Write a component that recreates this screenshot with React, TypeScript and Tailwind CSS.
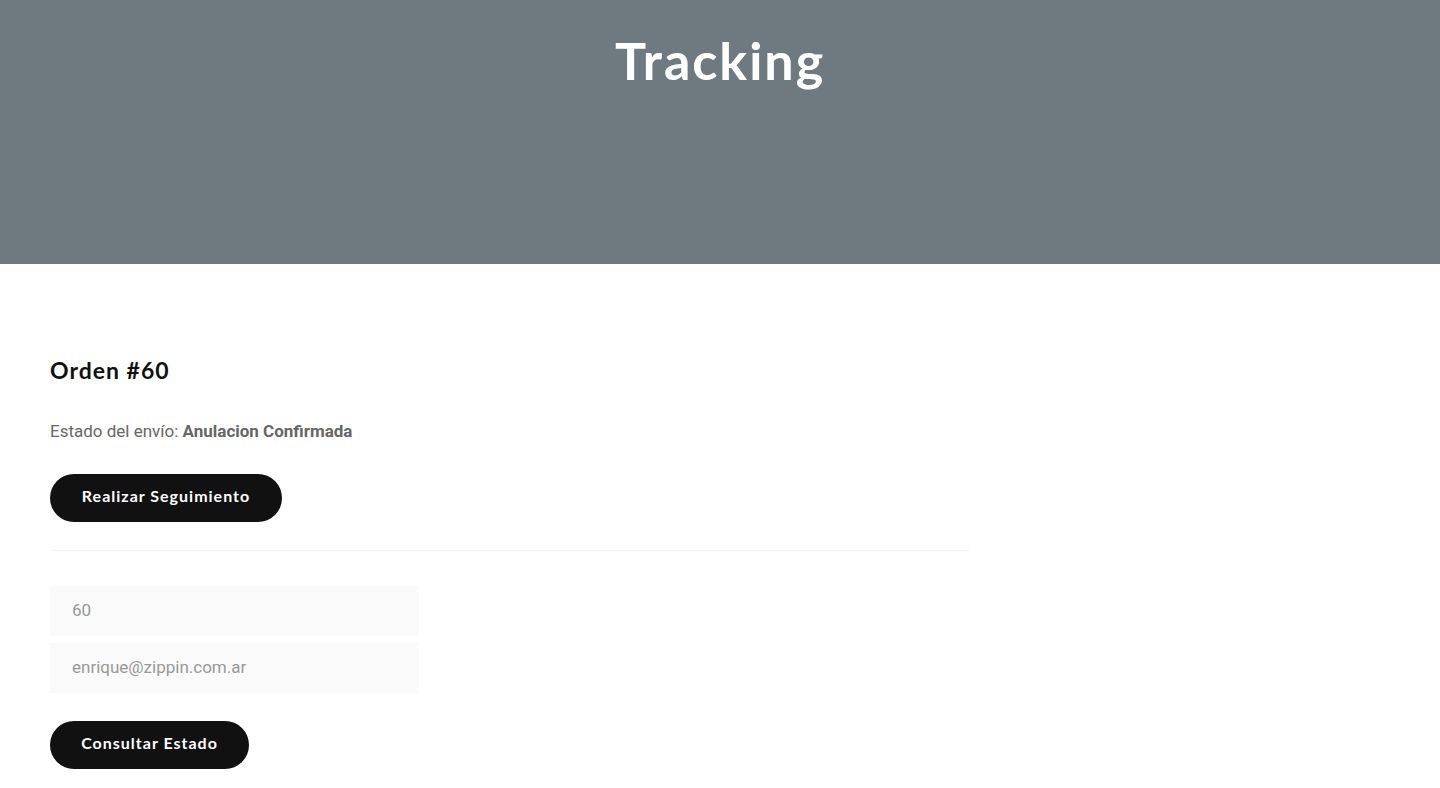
import React from "react";

export default function App() {
  const heading = { fontFamily: '"Lato", "DejaVu Sans", sans-serif' };
  const body = { fontFamily: '"Roboto", "Liberation Sans", sans-serif' };
  return (
    <div className="min-h-[788px] bg-white">
      <header className="h-[264px] bg-[#6f7a80] flex justify-center">
        <h1 style={heading} className="mt-[25px] text-[52px] leading-[70px] font-bold text-white tracking-[2px]">
          Tracking
        </h1>
      </header>
      <main className="px-[50px] pt-[91px]">
        <div className="w-[920px]">
          <h2 style={heading} className="text-[23px] leading-[30px] font-bold text-[#111] tracking-[1px]">
            Orden #60
          </h2>
          <p style={body} className="mt-[34px] text-[17px] leading-[24px] text-[#666]">
            Estado del envío: <span className="font-bold">Anulacion Confirmada</span>
          </p>
          <button style={heading} className="mt-[31px] h-[48px] w-[232px] pb-[4px] rounded-full bg-[#111] text-white text-[16px] font-bold tracking-[1px]">
            Realizar Seguimiento
          </button>
          <div className="mt-[28px] ml-[2px] h-px bg-[#f3f3f3]" />
          <div className="mt-[35px] flex flex-col gap-[7px] w-[369px]">
            <input
              style={body}
              readOnly
              value="60"
              className="h-[50px] bg-[#fafafa] px-[22px] pb-[2px] text-[17px] text-[#999] outline-none"
            />
            <input
              style={body}
              readOnly
              value="enrique@zippin.com.ar"
              className="h-[50px] bg-[#fafafa] px-[22px] pb-[2px] text-[17px] text-[#999] outline-none"
            />
          </div>
          <button style={heading} className="mt-[28px] h-[48px] w-[199px] pb-[4px] rounded-full bg-[#111] text-white text-[16px] font-bold tracking-[1px]">
            Consultar Estado
          </button>
        </div>
      </main>
    </div>
  );
}
